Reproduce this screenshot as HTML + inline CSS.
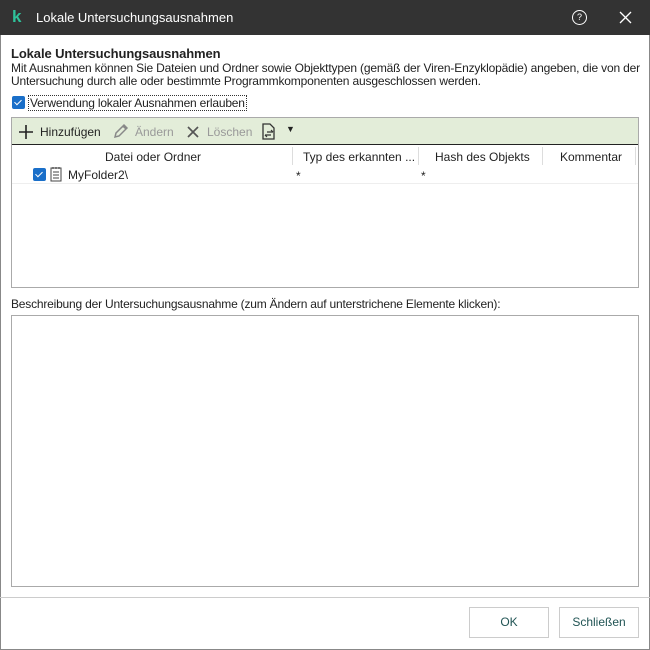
<!DOCTYPE html><html><head><style>
*{margin:0;padding:0;box-sizing:border-box}
body{width:650px;height:650px;background:#fff;font-family:"Liberation Sans",sans-serif;font-size:12px;color:#222;position:relative;overflow:hidden}
.a{position:absolute;white-space:nowrap}
.cb{position:absolute;width:13px;height:13px;background:#1a6fc9;border-radius:2px}
.cb:after{content:"";position:absolute;left:4px;top:2px;width:3px;height:6px;border:solid #fff;border-width:0 1.5px 1.5px 0;transform:rotate(45deg)}
</style></head><body>
<div class="a" style="left:0;top:0;width:650px;height:650px;border:1px solid #888"></div>
<div class="a" style="left:0;top:0;width:650px;height:35px;background:#333"></div>
<div class="a" style="left:12px;top:7px;color:#2fc29a;font-weight:bold;font-size:17px">k</div>
<div class="a" style="left:36px;top:10px;color:#fff;font-size:13px">Lokale Untersuchungsausnahmen</div>
<div class="a" style="left:572px;top:10px;width:15px;height:15px;border:1.3px solid #fff;border-radius:50%;color:#fff;font-size:9px;text-align:center;line-height:13px">?</div>
<svg class="a" style="left:619px;top:11px" width="13" height="13"><path d="M1 1L12 12M12 1L1 12" stroke="#fff" stroke-width="1.3"/></svg>
<div class="a" style="left:11px;top:46px;font-weight:bold;font-size:13px;letter-spacing:-0.1px">Lokale Untersuchungsausnahmen</div>
<div class="a" style="left:11px;top:62px;letter-spacing:-0.17px;line-height:13px">Mit Ausnahmen können Sie Dateien und Ordner sowie Objekttypen (gemäß der Viren-Enzyklopädie) angeben, die von der<br>Untersuchung durch alle oder bestimmte Programmkomponenten ausgeschlossen werden.</div>
<div class="cb" style="left:12px;top:96px"></div>
<div class="a" style="left:28px;top:95px;border:1px dotted #333;padding:0 1px;letter-spacing:-0.2px">Verwendung lokaler Ausnahmen erlauben</div>
<div class="a" style="left:11px;top:117px;width:628px;height:171px;border:1px solid #aaa"></div>
<div class="a" style="left:12px;top:118px;width:626px;height:27px;background:#e3edd9;border-bottom:1px solid #222"></div>
<svg class="a" style="left:19px;top:125px" width="14" height="14"><path d="M7 0V14M0 7H14" stroke="#222" stroke-width="1.6"/></svg>
<div class="a" style="left:40px;top:125px">Hinzufügen</div>
<svg class="a" style="left:113px;top:123px" width="16" height="16"><path d="M2 14L3 10L11 2L14 5L6 13Z M10 3L13 6" stroke="#888" stroke-width="1.5" fill="none"/></svg>
<div class="a" style="left:135px;top:125px;color:#999">Ändern</div>
<svg class="a" style="left:187px;top:126px" width="12" height="12"><path d="M1 1L11 11M11 1L1 11" stroke="#555" stroke-width="1.7"/></svg>
<div class="a" style="left:207px;top:125px;color:#999">Löschen</div>
<svg class="a" style="left:262px;top:123px" width="14" height="17"><path d="M1 1H8L12 5V16H1Z" stroke="#333" stroke-width="1.3" fill="none"/><path d="M5 9H11M9 7L11 9M3 12H9M5 14L3 12" stroke="#333" stroke-width="1.2" fill="none"/></svg>
<div class="a" style="left:286px;top:124px;font-size:9px">▼</div>
<div class="a" style="left:105px;top:150px">Datei oder Ordner</div>
<div class="a" style="left:292px;top:147px;width:1px;height:18px;background:#ddd"></div>
<div class="a" style="left:303px;top:150px">Typ des erkannten ...</div>
<div class="a" style="left:418px;top:147px;width:1px;height:18px;background:#ddd"></div>
<div class="a" style="left:435px;top:150px">Hash des Objekts</div>
<div class="a" style="left:542px;top:147px;width:1px;height:18px;background:#ddd"></div>
<div class="a" style="left:560px;top:150px">Kommentar</div>
<div class="a" style="left:635px;top:147px;width:1px;height:18px;background:#ddd"></div>
<div class="cb" style="left:33px;top:168px"></div>
<svg class="a" style="left:50px;top:166px" width="12" height="16"><rect x="1" y="2" width="10" height="13" stroke="#444" fill="#fff"/><path d="M3 6H9M3 9H9M3 12H9M3 1V3M6 1V3M9 1V3" stroke="#444"/></svg>
<div class="a" style="left:68px;top:168px">MyFolder2\</div>
<div class="a" style="left:296px;top:169px">*</div>
<div class="a" style="left:421px;top:169px">*</div>
<div class="a" style="left:12px;top:183px;width:626px;height:1px;background:#eee"></div>
<div class="a" style="left:11px;top:297px;letter-spacing:-0.2px">Beschreibung der Untersuchungsausnahme (zum Ändern auf unterstrichene Elemente klicken):</div>
<div class="a" style="left:11px;top:315px;width:628px;height:272px;border:1px solid #aaa"></div>
<div class="a" style="left:0;top:597px;width:650px;height:1px;background:#ccc"></div>
<div class="a" style="left:469px;top:607px;width:80px;height:31px;border:1px solid #ccc;text-align:center;line-height:29px;color:#255">OK</div>
<div class="a" style="left:559px;top:607px;width:80px;height:31px;border:1px solid #ccc;text-align:center;line-height:29px;color:#255">Schließen</div>
</body></html>
